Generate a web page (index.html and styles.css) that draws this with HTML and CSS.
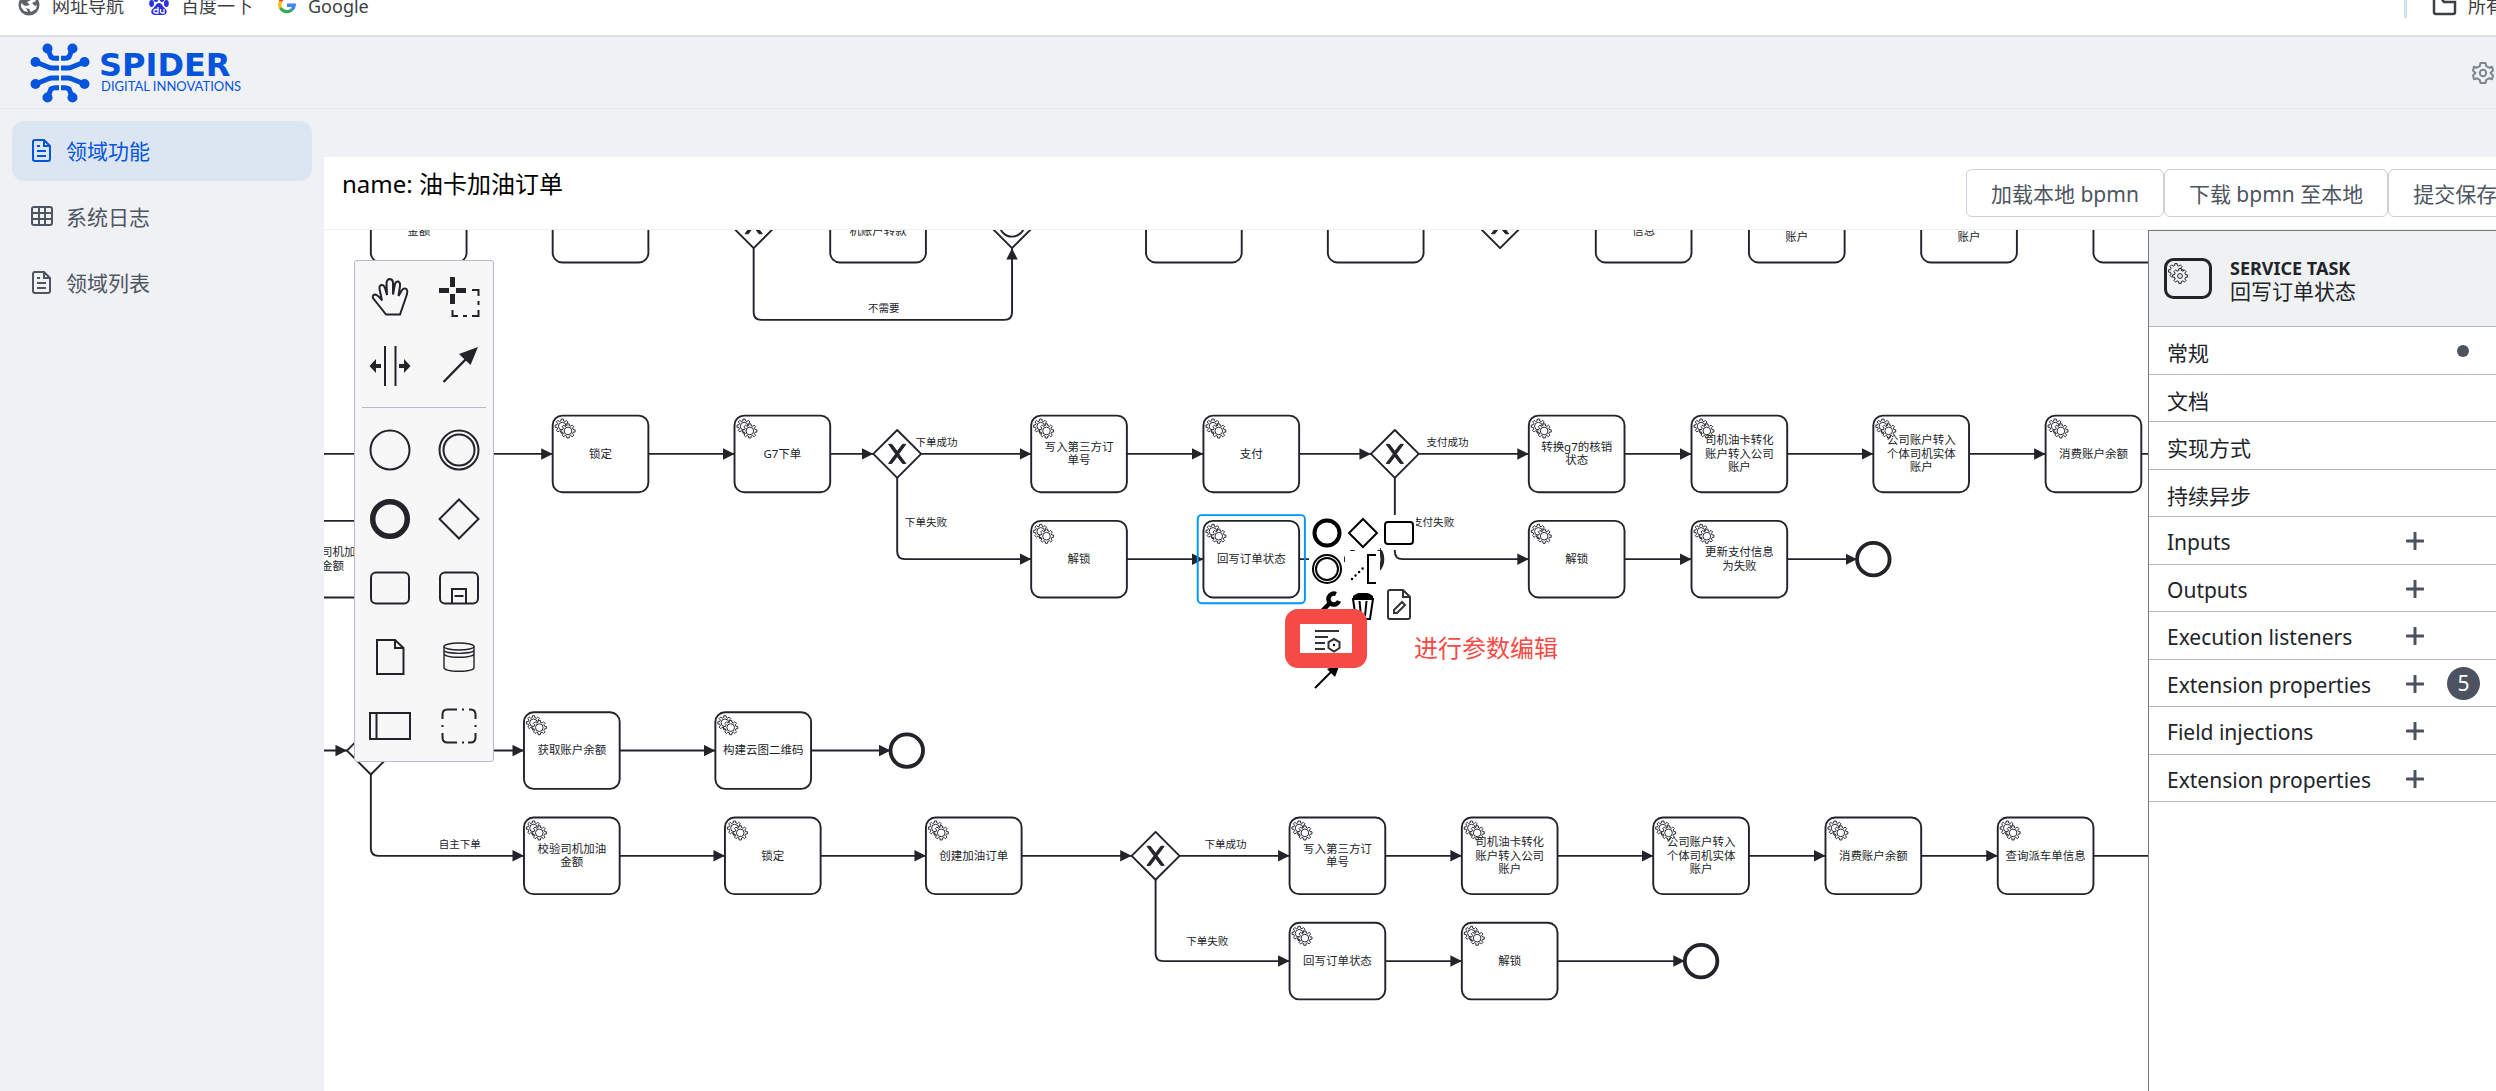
FILE: index.html
```html
<!DOCTYPE html>
<html lang="zh-CN">
<head>
<meta charset="utf-8">
<title>Spider Digital Innovations</title>
<link rel="stylesheet" href="styles.css">
</head>
<body>
<svg class="defs" aria-hidden="true">
  <defs>
    <polygon id="gear" points="5.5,-1.3 7.4,-1.2 7.4,1.2 5.5,1.3 4.8,3 6.1,4.4 4.4,6.1 3,4.8 1.3,5.5 1.2,7.4 -1.2,7.4 -1.3,5.5 -3,4.8 -4.4,6.1 -6.1,4.4 -4.8,3 -5.5,1.3 -7.4,1.2 -7.4,-1.2 -5.5,-1.3 -4.8,-3 -6.1,-4.4 -4.4,-6.1 -3,-4.8 -1.3,-5.5 -1.2,-7.4 1.2,-7.4 1.3,-5.5 3,-4.8 4.4,-6.1 6.1,-4.4 4.8,-3"/>
    <g id="gears" class="gears">
      <use href="#gear" x="-3" y="-2"/><circle cx="-3" cy="-2" r="4"/>
      <use href="#gear" x="3" y="3"/><circle cx="3" cy="3" r="4"/>
    </g>
    <g id="task">
      <rect class="shape" x="-50" y="-40" width="100" height="80" rx="10"/>
      <use href="#gears" x="-37" y="-27"/>
    </g>
    <g id="gateway"><path class="shape" d="M0-25L25 0L0 25L-25 0Z"/></g>
    <g id="exclusive">
      <use href="#gateway"/>
      <path class="mark" d="M-9-10L-1.6 0L-9 10H-5.6L0 2.6L5.6 10H9L1.6 0L9-10H5.6L0-2.6L-5.6-10Z"/>
    </g>
    <circle id="end" class="shape end" r="17"/>
    <marker id="arrow" viewBox="0 0 11 11" refX="11" refY="5.5" markerWidth="12" markerHeight="12" markerUnits="userSpaceOnUse" orient="auto"><path class="head" d="M0 0L11 5.5L0 11Z"/></marker>
    <g id="doc">
      <path d="M4 1H13L19 7V20A2 2 0 0 1 17 22H4A2 2 0 0 1 2 20V3A2 2 0 0 1 4 1ZM13 1V7H19M6 7H9M6 12H15M6 17H15"/>
    </g>
    <g id="plus"><path d="M9 1V17M1 9H17"/></g>
  </defs>
</svg>

<nav class="bookmarks">
  <div class="bookmark-list">
    <a href="#" class="bookmark">
      <svg width="22" height="24" viewBox="0 0 22 24"><circle cx="11" cy="11" r="10.5" fill="#5f6368"/><path fill="#fff" d="M3 9L7 12L12 11L9 8L13 6L10 2L16 3L18 7L14 9L17 12L19 11L18 15L13 18L11 15L8 14L10 18L6 17L3 13Z"/></svg>
      <span>网址导航</span></a>
    <a href="#" class="bookmark baidu">
      <svg width="20" height="24" viewBox="0 0 20 24"><g fill="#2932e1"><ellipse cx="7" cy="4" rx="2.6" ry="4"/><ellipse cx="13" cy="4" rx="2.6" ry="4"/><ellipse cx="2.6" cy="9.500" rx="2.400" ry="3.400"/><ellipse cx="17.400" cy="9.500" rx="2.400" ry="3.400"/><path d="M10 9C13 9 13 12 16 14.500C19 17 18 21 14 21H6C2 21 1 17 4 14.500C7 12 7 9 10 9Z"/></g><path fill="none" stroke="#fff" stroke-width="1.300" d="M9 13V19H6.500A1.700 1.700 0 0 1 6.500 15.500H9M11.500 15V17.500Q11.500 19 13 19H15V15"/></svg>
      <span>百度一下</span></a>
    <a href="#" class="bookmark google">
      <svg width="18" height="24" viewBox="0 0 18 24"><g fill="none" stroke-width="3.400"><path stroke="#ea4335" d="M15 5A7.300 7.300 0 0 0 2.500 7.500"/><path stroke="#fbbc05" d="M2.500 7.500A7.500 7.500 0 0 0 2.500 14"/><path stroke="#34a853" d="M2.500 14A7.400 7.400 0 0 0 13.500 16"/><path stroke="#4285f4" d="M13.500 16A7 7 0 0 0 16.200 11.200H9"/></g></svg>
      <span>Google</span></a>
  </div>
  <div class="bookmark-more">
    <svg width="25" height="24" viewBox="0 0 25 24"><path fill="none" stroke="#3c4043" stroke-width="2.500" d="M2 3V18A2 2 0 0 0 4 20H21A2 2 0 0 0 23 18V8H12L9 4H2"/></svg>
    <a href="#">所有书签</a>
  </div>
</nav>

<header class="header">
  <a href="#" class="brand">
    <svg width="60" height="60" viewBox="-30 -30 60 60">
      <g id="legs"><path d="M12.500-24.500L9-16Q7-14.800 5-14.800H1M24.500-11L12-6Q10-5 8-5H1"/><circle cx="12.500" cy="-24.500" r="5"/><circle cx="24.500" cy="-11" r="5"/></g>
      <use href="#legs" transform="scale(-1 1)"/><use href="#legs" transform="scale(1 -1)"/><use href="#legs" transform="scale(-1 -1)"/>
    </svg>
    <span class="brand-text"><span class="brand-name">SPIDER</span><span class="brand-sub">DIGITAL INNOVATIONS</span></span>
  </a>
  <button class="settings" aria-label="设置">
    <svg width="22" height="24" viewBox="-11 -12 22 24"><path d="M-2.500-10H2.500L3.300-6.800L6-5.300L9-6.300L10-2.500L7.500 0L10 2.500L9 6.300L6 5.300L3.300 6.800L2.500 10H-2.500L-3.300 6.800L-6 5.300L-9 6.300L-10 2.500L-7.500 0L-10-2.500L-9-6.300L-6-5.300L-3.300-6.800Z"/><circle r="3.200"/></svg>
  </button>
</header>

<div class="layout">
  <nav class="sidebar">
    <a href="#" class="menu-item active"><svg width="22" height="24" viewBox="0 -1 22 24"><use href="#doc"/></svg>领域功能</a>
    <a href="#" class="menu-item"><svg width="22" height="24" viewBox="0 0 22 24"><path d="M3 3H19A2 2 0 0 1 21 5V19A2 2 0 0 1 19 21H3A2 2 0 0 1 1 19V5A2 2 0 0 1 3 3ZM1 9H21M1 15H21M8 3V21M14 3V21"/></svg>系统日志</a>
    <a href="#" class="menu-item"><svg width="22" height="24" viewBox="0 -1 22 24"><use href="#doc"/></svg>领域列表</a>
  </nav>

  <main class="content">
    <div class="toolbar">
      <h1 class="title">name: 油卡加油订单</h1>
      <div class="actions">
        <button class="btn">加载本地 bpmn</button>
        <button class="btn">下载 bpmn 至本地</button>
        <button class="btn">提交保存</button>
      </div>
    </div>

    <div class="editor">
      <div class="canvas">
        <svg class="diagram" width="100%" height="100%">
          <g transform="translate(-1 -1) scale(.957)">
            <g class="flows">
              <path d="M450 20V87Q450 95 458 95H712Q720 95 720 87V20"/>
              <path d="M-20 235H240"/><path d="M340 235H430"/><path d="M530 235H575"/><path d="M625 235H740"/><path d="M840 235H920"/><path d="M1020 235H1095"/><path d="M1145 235H1260"/><path d="M1360 235H1430"/><path d="M1530 235H1620"/><path d="M1720 235H1800"/><path d="M1900 235H2000"/>
              <path d="M600 260V337Q600 345 608 345H740"/><path d="M840 345H920"/><path d="M1020 345H1073"/>
              <path d="M1120 260V337Q1120 345 1128 345H1260"/><path d="M1360 345H1430"/><path d="M1530 345H1603"/>
              <path d="M-20 545H25"/><path d="M75 545H210"/><path d="M310 545H410"/><path d="M510 545H593"/>
              <path d="M50 570V647Q50 655 58 655H210"/><path d="M310 655H420"/><path d="M520 655H630"/><path d="M730 655H845"/><path d="M895 655H1010"/><path d="M1110 655H1190"/><path d="M1290 655H1390"/><path d="M1490 655H1570"/><path d="M1670 655H1750"/><path d="M1850 655H2000"/>
              <path d="M870 680V757Q870 765 878 765H1010"/><path d="M1110 765H1190"/><path d="M1290 765H1423"/>
            </g>

            <g transform="translate(100 -5)"><use href="#task"/><text y="11">金额</text></g>
            <use href="#task" x="290" y="-5"/>
            <use href="#exclusive" x="450" y="-5"/>
            <g transform="translate(580 -5)"><use href="#task"/><text y="11">机账户转款</text></g>
            <g transform="translate(720 -5)"><use href="#gateway"/><circle class="ring" r="13"/></g>
            <use href="#task" x="910" y="-5"/>
            <use href="#task" x="1100" y="-5"/>
            <use href="#exclusive" x="1230" y="-5"/>
            <g transform="translate(1380 -5)"><use href="#task"/><text y="11">信息</text></g>
            <g transform="translate(1540 -5)"><use href="#task"/><text y="18">账户</text></g>
            <g transform="translate(1720 -5)"><use href="#task"/><text y="18">账户</text></g>
            <use href="#task" x="1900" y="-5"/>

            <g transform="translate(290 235)"><use href="#task"/><text y="4">锁定</text></g>
            <g transform="translate(480 235)"><use href="#task"/><text y="4">G7下单</text></g>
            <use href="#exclusive" x="600" y="235"/>
            <g transform="translate(790 235)"><use href="#task"/><text><tspan x="0" y="-3">写入第三方订</tspan><tspan x="0" y="11">单号</tspan></text></g>
            <g transform="translate(970 235)"><use href="#task"/><text y="4">支付</text></g>
            <use href="#exclusive" x="1120" y="235"/>
            <g transform="translate(1310 235)"><use href="#task"/><text><tspan x="0" y="-3">转换g7的核销</tspan><tspan x="0" y="11">状态</tspan></text></g>
            <g transform="translate(1480 235)"><use href="#task"/><text><tspan x="0" y="-10">司机油卡转化</tspan><tspan x="0" y="4">账户转入公司</tspan><tspan x="0" y="18">账户</tspan></text></g>
            <g transform="translate(1670 235)"><use href="#task"/><text><tspan x="0" y="-10">公司账户转入</tspan><tspan x="0" y="4">个体司机实体</tspan><tspan x="0" y="18">账户</tspan></text></g>
            <g transform="translate(1850 235)"><use href="#task"/><text y="4">消费账户余额</text></g>

            <g transform="translate(10 345)"><use href="#task"/><text><tspan x="0" y="-3">校验司机加油</tspan><tspan x="0" y="11">金额</tspan></text></g>
            <g transform="translate(790 345)"><use href="#task"/><text y="4">解锁</text></g>
            <g transform="translate(970 345)"><use href="#task"/><text y="4">回写订单状态</text><rect class="selection" x="-56" y="-46" width="112" height="92" rx="4"/></g>
            <use href="#end" x="1090" y="345"/>
            <g transform="translate(1310 345)"><use href="#task"/><text y="4">解锁</text></g>
            <g transform="translate(1480 345)"><use href="#task"/><text><tspan x="0" y="-3">更新支付信息</tspan><tspan x="0" y="11">为失败</tspan></text></g>
            <use href="#end" x="1620" y="345"/>

            <use href="#gateway" x="50" y="545"/>
            <g transform="translate(260 545)"><use href="#task"/><text y="4">获取账户余额</text></g>
            <g transform="translate(460 545)"><use href="#task"/><text y="4">构建云图二维码</text></g>
            <use href="#end" x="610" y="545"/>

            <g transform="translate(260 655)"><use href="#task"/><text><tspan x="0" y="-3">校验司机加油</tspan><tspan x="0" y="11">金额</tspan></text></g>
            <g transform="translate(470 655)"><use href="#task"/><text y="4">锁定</text></g>
            <g transform="translate(680 655)"><use href="#task"/><text y="4">创建加油订单</text></g>
            <use href="#exclusive" x="870" y="655"/>
            <g transform="translate(1060 655)"><use href="#task"/><text><tspan x="0" y="-3">写入第三方订</tspan><tspan x="0" y="11">单号</tspan></text></g>
            <g transform="translate(1240 655)"><use href="#task"/><text><tspan x="0" y="-10">司机油卡转化</tspan><tspan x="0" y="4">账户转入公司</tspan><tspan x="0" y="18">账户</tspan></text></g>
            <g transform="translate(1440 655)"><use href="#task"/><text><tspan x="0" y="-10">公司账户转入</tspan><tspan x="0" y="4">个体司机实体</tspan><tspan x="0" y="18">账户</tspan></text></g>
            <g transform="translate(1620 655)"><use href="#task"/><text y="4">消费账户余额</text></g>
            <g transform="translate(1800 655)"><use href="#task"/><text y="4">查询派车单信息</text></g>

            <g transform="translate(1060 765)"><use href="#task"/><text y="4">回写订单状态</text></g>
            <g transform="translate(1240 765)"><use href="#task"/><text y="4">解锁</text></g>
            <use href="#end" x="1440" y="765"/>

            <g class="flow-labels">
              <text x="586" y="87">不需要</text>
              <text x="641" y="227">下单成功</text>
              <text x="630" y="310">下单失败</text>
              <text x="1175" y="227">支付成功</text>
              <text x="1160" y="310">支付失败</text>
              <text x="143" y="647">自主下单</text>
              <text x="943" y="647">下单成功</text>
              <text x="924" y="748">下单失败</text>
            </g>
          </g>
        </svg>

        <div class="palette">
          <button class="tool" aria-label="抓手"><svg viewBox="-21 -21 42 42"><path d="M-4 17.500L-17 1Q-18-2-15-2.500Q-12-2-8 3.500L-10.500-8Q-11-12-8-12Q-6-12-5-9L-3-2L-3.500-14Q-3-18 0-18Q3-17.500 3-14V-2.500L5-13Q6-16 8.500-15.500Q10.500-14 10-11L8.500-1L12-7Q14-9.500 16.500-8Q18-6 17-3L14 6L10 17.500Z"/></svg></button>
          <button class="tool" aria-label="框选"><svg viewBox="-21 -21 42 42"><path stroke-width="5" d="M-6.500-20V-10M-6.500-3V7M-20-6.500H-10M-3-6.500H7"/><path d="M13-7H19.500V-1M19.500 4V8M19.500 13V19H13M8 19H4M-1 19H-6.500V13"/></svg></button>
          <button class="tool" aria-label="空间"><svg viewBox="-21 -21 42 42"><path d="M-5-20V20M5.500-20V20"/><path class="solid" d="M-20.500 0L-14-7V-2H-9V2H-14V7ZM20.500 0L14-7V-2H9V2H14V7Z"/></svg></button>
          <button class="tool" aria-label="连线"><svg viewBox="-21 -21 42 42"><path stroke-width="2.500" d="M-15.500 16L8-8"/><path class="solid" d="M19-19L0-12L11.500-1Z"/></svg></button>
          <hr class="separator">
          <button class="tool" aria-label="开始事件"><svg viewBox="-21 -21 42 42"><circle r="19.500"/></svg></button>
          <button class="tool" aria-label="中间事件"><svg viewBox="-21 -21 42 42"><circle r="19.500"/><circle r="15.500"/></svg></button>
          <button class="tool" aria-label="结束事件"><svg viewBox="-21 -21 42 42"><circle r="17.300" stroke-width="5.500"/></svg></button>
          <button class="tool" aria-label="网关"><svg viewBox="-21 -21 42 42"><path d="M0-19.500L19.500 0L0 19.500L-19.500 0Z"/></svg></button>
          <button class="tool" aria-label="任务"><svg viewBox="-21 -21 42 42"><rect x="-19" y="-15.500" width="38" height="31" rx="5"/></svg></button>
          <button class="tool" aria-label="子流程"><svg viewBox="-21 -21 42 42"><rect x="-19" y="-15.500" width="38" height="31" rx="5"/><path d="M-7 15V1H7V15M-4.500 8H4.500"/></svg></button>
          <button class="tool" aria-label="数据对象"><svg viewBox="-21 -21 42 42"><path d="M-13-17H5L13.500-9V17H-13ZM5-17V-9H13.500"/></svg></button>
          <button class="tool" aria-label="数据存储"><svg viewBox="-21 -21 42 42"><g stroke-width="1.400"><ellipse cy="-10.500" rx="15" ry="3.500"/><path d="M-15-10.500V10.500C-15 15.500 15 15.500 15 10.500V-10.500M-15-7C-15-2.500 15-2.500 15-7M-15-3.500C-15 1.500 15 1.500 15-3.500"/></g></svg></button>
          <button class="tool" aria-label="泳池"><svg viewBox="-21 -21 42 42"><path d="M-20-13H20V13H-20ZM-13.500-13V13"/></svg></button>
          <button class="tool" aria-label="分组"><svg viewBox="-21 -21 42 42"><path stroke-width="2" d="M-16.500-7V-11.500Q-16.500-16.500-11.500-16.500H-2M3-16.500H5M10-16.500H11.500Q16.500-16.500 16.500-11.500V-7M16.500-1V1M16.500 7V11.500Q16.500 16.500 11.500 16.500H9M5 16.500H3M-2 16.500H-11.500Q-16.500 16.500-16.500 11.500V7M-16.500-1V1"/></svg></button>
        </div>

        <div class="context-pad">
          <button class="entry" aria-label="追加结束事件"><svg viewBox="-16 -16 32 32"><circle r="12.500" stroke-width="4"/></svg></button>
          <button class="entry" aria-label="追加网关"><svg viewBox="-16 -16 32 32"><path d="M0-14L14 0L0 14L-14 0Z"/></svg></button>
          <button class="entry" aria-label="追加任务"><svg viewBox="-16 -16 32 32"><rect x="-14" y="-11" width="28" height="22" rx="3"/></svg></button>
          <button class="entry" aria-label="追加中间事件"><svg viewBox="-16 -16 32 32"><circle r="14"/><circle r="11"/></svg></button>
          <button class="entry" aria-label="添加注释"><svg viewBox="-16 -16 32 32"><path stroke-width="2" d="M13-14H5V14H13"/><path stroke-width="2.500" stroke-linecap="round" stroke-dasharray="0 5" d="M-11 10L3-4"/></svg></button>
          <span></span>
          <button class="entry" aria-label="更改类型"><svg viewBox="-16 -16 32 32"><path stroke-width="4.500" d="M9-11A5.500 5.500 0 1 0 12-4M3-2L-12 13"/></svg></button>
          <button class="entry" aria-label="删除"><svg viewBox="-16 -16 32 32"><path d="M-10-6L-7 14H7L10-6ZM-3.500-4L-2 11M3.500-4L2 11"/><path class="solid" d="M-10-9Q-6-12-4-12H4Q6-12 10-9V-7H-10Z"/></svg></button>
          <button class="entry" aria-label="编辑文档"><svg viewBox="-16 -16 32 32"><path stroke="#333" stroke-width="2" d="M-9-15H4L11-8V12A2 2 0 0 1 9 14H-9A2 2 0 0 1-11 12V-13A2 2 0 0 1-9-15ZM4-15V-8H11M-5 5L3-3L6 0L-2 8H-5Z"/></svg></button>
          <button class="entry" aria-label="参数编辑"><svg viewBox="-16 -16 32 32"><path stroke="#333" d="M-12-10H12M-12-4H1M-12 2H-2M-12 8H-2M7-2L12.500 1V7L7 10.500L1.500 7V1Z"/><circle class="solid" cx="7" cy="4" r="1.200"/></svg></button>
          <span></span><span></span>
          <button class="entry" aria-label="连接"><svg viewBox="-16 -16 32 32"><path stroke-width="2" d="M-12 11L6-7"/><path class="solid" d="M13-13L0-8L8 0Z"/></svg></button>
        </div>
        <div class="highlight"></div>
        <p class="note">进行参数编辑</p>
      </div>

      <aside class="panel">
        <div class="panel-header">
          <svg width="48" height="46" viewBox="0 0 48 46"><rect x="1.500" y="3.500" width="45" height="38" rx="8" fill="none" stroke="#22242a" stroke-width="3"/><g class="panel-gears"><use href="#gear" x="12" y="15"/><use href="#gear" x="16" y="20"/><circle cx="16" cy="20" r="2.400"/></g></svg>
          <div><div class="panel-type">SERVICE TASK</div><div class="panel-name">回写订单状态</div></div>
        </div>
        <div class="groups">
          <div class="group"><span class="group-name">常规</span><span class="dot"></span></div>
          <div class="group"><span class="group-name">文档</span></div>
          <div class="group"><span class="group-name">实现方式</span></div>
          <div class="group"><span class="group-name">持续异步</span></div>
          <div class="group"><span class="group-name">Inputs</span><button class="add" aria-label="添加"><svg width="18" height="18"><use href="#plus"/></svg></button></div>
          <div class="group"><span class="group-name">Outputs</span><button class="add" aria-label="添加"><svg width="18" height="18"><use href="#plus"/></svg></button></div>
          <div class="group"><span class="group-name">Execution listeners</span><button class="add" aria-label="添加"><svg width="18" height="18"><use href="#plus"/></svg></button></div>
          <div class="group"><span class="group-name">Extension properties</span><button class="add" aria-label="添加"><svg width="18" height="18"><use href="#plus"/></svg></button><span class="badge">5</span></div>
          <div class="group"><span class="group-name">Field injections</span><button class="add" aria-label="添加"><svg width="18" height="18"><use href="#plus"/></svg></button></div>
          <div class="group"><span class="group-name">Extension properties</span><button class="add" aria-label="添加"><svg width="18" height="18"><use href="#plus"/></svg></button></div>
        </div>
      </aside>
    </div>
  </main>
</div>
</body>
</html>
```

FILE: styles.css
```css
* { box-sizing: border-box; }
body {
  margin: 0;
  height: 100vh;
  display: flex;
  flex-direction: column;
  overflow: hidden;
  background: #f0f1f5;
  color: #22242a;
  font-family: "Noto Sans", "Noto Sans CJK SC", sans-serif;
  font-size: 21px;
}
a { color: inherit; text-decoration: none; }
button { font: inherit; color: inherit; padding: 0; border: 0; background: none; }
svg { display: block; flex: none; }
.defs { position: absolute; width: 0; height: 0; }

.bookmarks {
  display: flex;
  justify-content: space-between;
  flex: none;
  height: 37px;
  overflow: hidden;
  background: #fff;
  border-bottom: 2px solid #dddfe2;
  color: #3c4043;
  font-size: 18px;
  line-height: 24px;
}
.bookmark-list { display: flex; gap: 25px; margin-top: -6px; padding-left: 18px; }
.bookmark { display: flex; gap: 12px; height: 24px; }
.bookmark-more {
  display: flex;
  gap: 11px;
  width: 92px;
  height: 24px;
  margin-top: -6px;
  padding-left: 25px;
  border-left: 3px solid #cfe0fc;
  white-space: nowrap;
}

.header {
  display: flex;
  align-items: center;
  justify-content: space-between;
  flex: none;
  height: 72px;
  padding: 0 2px 0 30px;
  border-bottom: 1px solid #e7e9ed;
}
.brand { display: flex; align-items: center; gap: 9px; color: #0554dc; }
.brand svg { fill: #0554dc; stroke: none; }
.brand path { fill: none; stroke: #0554dc; stroke-width: 5; }
.brand-text { display: flex; flex-direction: column; }
.brand-name { font: bold 32px/26px "DejaVu Sans", sans-serif; }
.brand-sub { font: 13px/16px "Lato", sans-serif; padding-left: 2px; }
.settings svg { fill: none; stroke: #7d8592; stroke-width: 2; stroke-linejoin: round; }

.layout { display: flex; flex: 1; min-height: 0; }
.sidebar {
  display: flex;
  flex-direction: column;
  gap: 6px;
  flex: none;
  width: 324px;
  padding: 12px;
  color: #4e5561;
}
.menu-item {
  display: flex;
  align-items: center;
  gap: 13px;
  height: 60px;
  padding: 0 0 2px 19px;
  border-radius: 12px;
}
.menu-item svg { fill: none; stroke: currentColor; stroke-width: 2; }
.active { background: #dce6f3; color: #0554dc; }

.content {
  display: flex;
  flex-direction: column;
  flex: 1;
  min-width: 0;
  margin-top: 48px;
  background: #fff;
}
.toolbar {
  display: flex;
  justify-content: space-between;
  flex: none;
  height: 73px;
  padding-left: 18px;
  border-bottom: 1px solid #f0f0f0;
}
.title { margin: 9px 0 0; color: #000; font-size: 24px; font-weight: 400; line-height: 36px; }
.actions { display: flex; flex: none; width: 530px; padding-top: 12px; overflow: hidden; }
.btn {
  flex: none;
  height: 48px;
  padding: 0 24px;
  border: 1px solid #cdd0d9;
  border-radius: 6px;
  background: #fff;
  color: #4e5561;
}

.editor { display: flex; flex: 1; min-height: 0; }
.canvas { position: relative; flex: 1; min-width: 0; overflow: hidden; }
.diagram { position: absolute; inset: 0; }
.diagram text { fill: #22242a; font-size: 12px; text-anchor: middle; }
.diagram .flow-labels text { font-size: 11px; }
.shape { fill: #fff; stroke: #22242a; stroke-width: 2; stroke-linejoin: round; }
.end { stroke-width: 4; }
.mark { fill: #22242a; stroke: #22242a; stroke-width: 1; }
.head { fill: #22242a; }
.ring { fill: none; stroke: #22242a; stroke-width: 2; }
.flows path { fill: none; stroke: #22242a; stroke-width: 2; marker-end: url(#arrow); }
.gears { fill: #fff; stroke: #22242a; stroke-width: 1; }
.panel-gears { fill: #f0f1f3; stroke: #22242a; stroke-width: 1; }
.selection { fill: none; stroke: #0095ff; stroke-width: 2; }

.palette {
  position: absolute;
  left: 30px;
  top: 30px;
  display: grid;
  grid-template-columns: 69px 69px;
  padding: 1px 0;
  border: 1px solid #b8bac8;
  border-radius: 3px;
  background: #f7f7f8;
}
.tool { display: grid; place-items: center; height: 69px; }
.tool svg { width: 42px; height: 42px; }
.tool svg, .entry svg { fill: none; stroke: #22242a; stroke-width: 2; }
.tool .solid { fill: #22242a; stroke: none; }
.separator {
  grid-column: 1 / 3;
  width: 124px;
  height: 1px;
  margin: 7px auto;
  border: 0;
  background: #b8bac8;
}

.context-pad {
  position: absolute;
  left: 985px;
  top: 285px;
  display: grid;
  grid-template-columns: repeat(3, 35px);
  grid-auto-rows: 35px;
  gap: 1px;
}
.entry { display: grid; place-items: center; background: #fff; }
.entry svg { width: 32px; height: 32px; stroke: #000; }
.entry .solid { fill: #000; stroke: none; }
.highlight {
  position: absolute;
  left: 961px;
  top: 379px;
  width: 82px;
  height: 59px;
  border: 15px solid #f54a45;
  border-radius: 13px;
}
.note {
  position: absolute;
  left: 1090px;
  top: 400px;
  margin: 0;
  color: #f54a45;
  font-size: 24px;
  line-height: 36px;
}

.panel {
  flex: none;
  width: 348px;
  border: 1px solid #77797f;
  border-width: 1px 0 0 1px;
  background: #fff;
}
.panel-header {
  display: flex;
  align-items: center;
  gap: 18px;
  height: 96px;
  padding-left: 15px;
  border-bottom: 1px solid #b5b8c3;
  background: #f0f1f3;
}
.panel-type { font-size: 18px; font-weight: 700; line-height: 24px; }
.panel-name { line-height: 22px; }
.groups { display: grid; grid-template-rows: repeat(10, 1fr); height: 475px; }
.group {
  display: flex;
  align-items: center;
  padding: 2px 0 0 18px;
  border-bottom: 1px solid #b5b8c3;
}
.group-name { width: 239px; padding-top: 2px; }
.add svg { fill: none; stroke: #4d5261; stroke-width: 3; stroke-linecap: round; }
.dot { width: 12px; height: 12px; margin-left: 51px; border-radius: 50%; background: #4d5261; }
.badge {
  width: 33px;
  height: 33px;
  margin-left: 23px;
  border-radius: 50%;
  background: #4d5261;
  color: #fff;
  line-height: 33px;
  text-align: center;
}
```
